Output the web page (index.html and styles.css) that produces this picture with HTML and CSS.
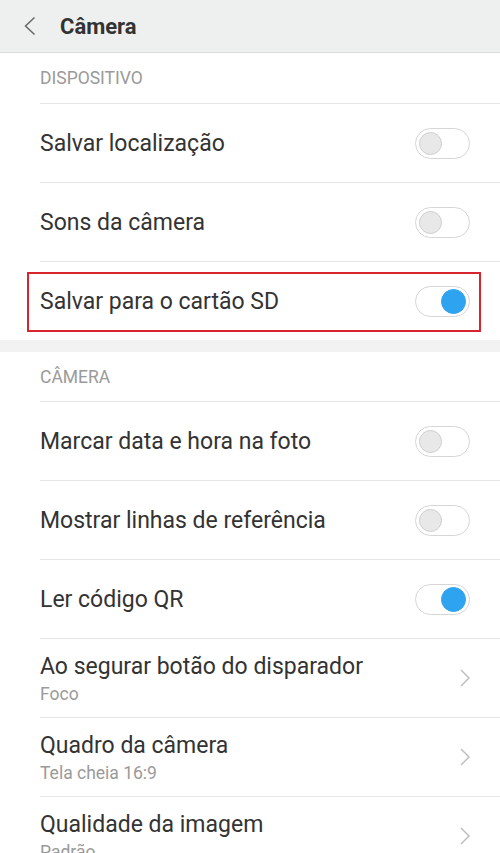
FILE: index.html
```html
<!DOCTYPE html>
<html lang="pt">
<head>
<meta charset="utf-8">
<link rel="stylesheet" href="styles.css">
</head>
<body>
<header class="topbar">
  <svg class="back" width="12" height="20" viewBox="0 0 12 20"><path d="M10.5 1.5 L1.5 10 L10.5 18.5" fill="none" stroke="#666" stroke-width="1.5"/></svg>
  <h1 class="title">Câmera</h1>
</header>
<section class="group">
  <div class="label">DISPOSITIVO</div>
  <div class="row"><span class="text">Salvar localização</span><span class="switch"><span class="knob"></span></span></div>
  <div class="row"><span class="text">Sons da câmera</span><span class="switch"><span class="knob"></span></span></div>
  <div class="row hl"><span class="text">Salvar para o cartão SD</span><span class="switch on"><span class="knob"></span></span><span class="box"></span></div>
</section>
<div class="gap"></div>
<section class="group">
  <div class="label cam">CÂMERA</div>
  <div class="row"><span class="text">Marcar data e hora na foto</span><span class="switch"><span class="knob"></span></span></div>
  <div class="row"><span class="text">Mostrar linhas de referência</span><span class="switch"><span class="knob"></span></span></div>
  <div class="row"><span class="text">Ler código QR</span><span class="switch on"><span class="knob"></span></span></div>
  <div class="row"><span class="stack"><span class="text">Ao segurar botão do disparador</span><span class="sub">Foco</span></span><svg class="chev" width="10" height="18" viewBox="0 0 10 18"><path d="M1 1 L9 9 L1 17" fill="none" stroke="#bbb" stroke-width="1.4"/></svg></div>
  <div class="row"><span class="stack"><span class="text">Quadro da câmera</span><span class="sub">Tela cheia 16:9</span></span><svg class="chev" width="10" height="18" viewBox="0 0 10 18"><path d="M1 1 L9 9 L1 17" fill="none" stroke="#bbb" stroke-width="1.4"/></svg></div>
  <div class="row"><span class="stack"><span class="text">Qualidade da imagem</span><span class="sub">Padrão</span></span><svg class="chev" width="10" height="18" viewBox="0 0 10 18"><path d="M1 1 L9 9 L1 17" fill="none" stroke="#bbb" stroke-width="1.4"/></svg></div>
</section>
</body>
</html>
```
FILE: styles.css
```css
* { box-sizing: border-box; }
html, body { margin: 0; padding: 0; background: #fff; overflow: hidden; }
body { font-family: Roboto, "Noto Sans", sans-serif; color: #333; height: 853px; }
.topbar {
  height: 53px;
  background: #eef0ef;
  border-bottom: 1px solid #d9dbda;
  display: flex;
  align-items: center;
  padding-left: 24px;
}
.back { display: block; }
.title { margin: 0 0 0 24px; font-size: 22px; font-weight: 700; color: #333; }
.group { background: #fff; }
.label {
  height: 50px;
  margin-left: 40px;
  display: flex;
  align-items: center;
  font-size: 17.5px;
  color: #9a9a9a;
}
.label.cam { height: 49px; }
.row {
  position: relative;
  margin-left: 40px;
  height: 79px;
  border-top: 1px solid #e6e6e6;
  display: flex;
  align-items: center;
  justify-content: space-between;
  padding-right: 30px;
}
.text { font-size: 23px; color: #333; }
.stack { display: flex; flex-direction: column; }
.stack .text { line-height: 27px; }
.sub { font-size: 17.5px; color: #9a9a9a; line-height: 20px; margin-top: 4px; }
.switch {
  width: 55px;
  height: 31px;
  border: 1px solid #d6d6d6;
  border-radius: 16px;
  display: flex;
  align-items: center;
  padding: 0 3px;
  background: #fff;
}
.knob {
  width: 23px;
  height: 23px;
  border-radius: 50%;
  background: #e8e8e8;
  border: 1px solid #cfcfcf;
}
.switch.on { justify-content: flex-end; }
.switch.on .knob { background: #2ea3f0; border-color: #2ea3f0; width: 25px; height: 25px; }
.gap { height: 12px; background: #f2f2f2; }
.box {
  position: absolute;
  left: -13px;
  top: 10px;
  width: 454px;
  height: 60px;
  border: 2px solid #d8242f;
  pointer-events: none;
}
```
